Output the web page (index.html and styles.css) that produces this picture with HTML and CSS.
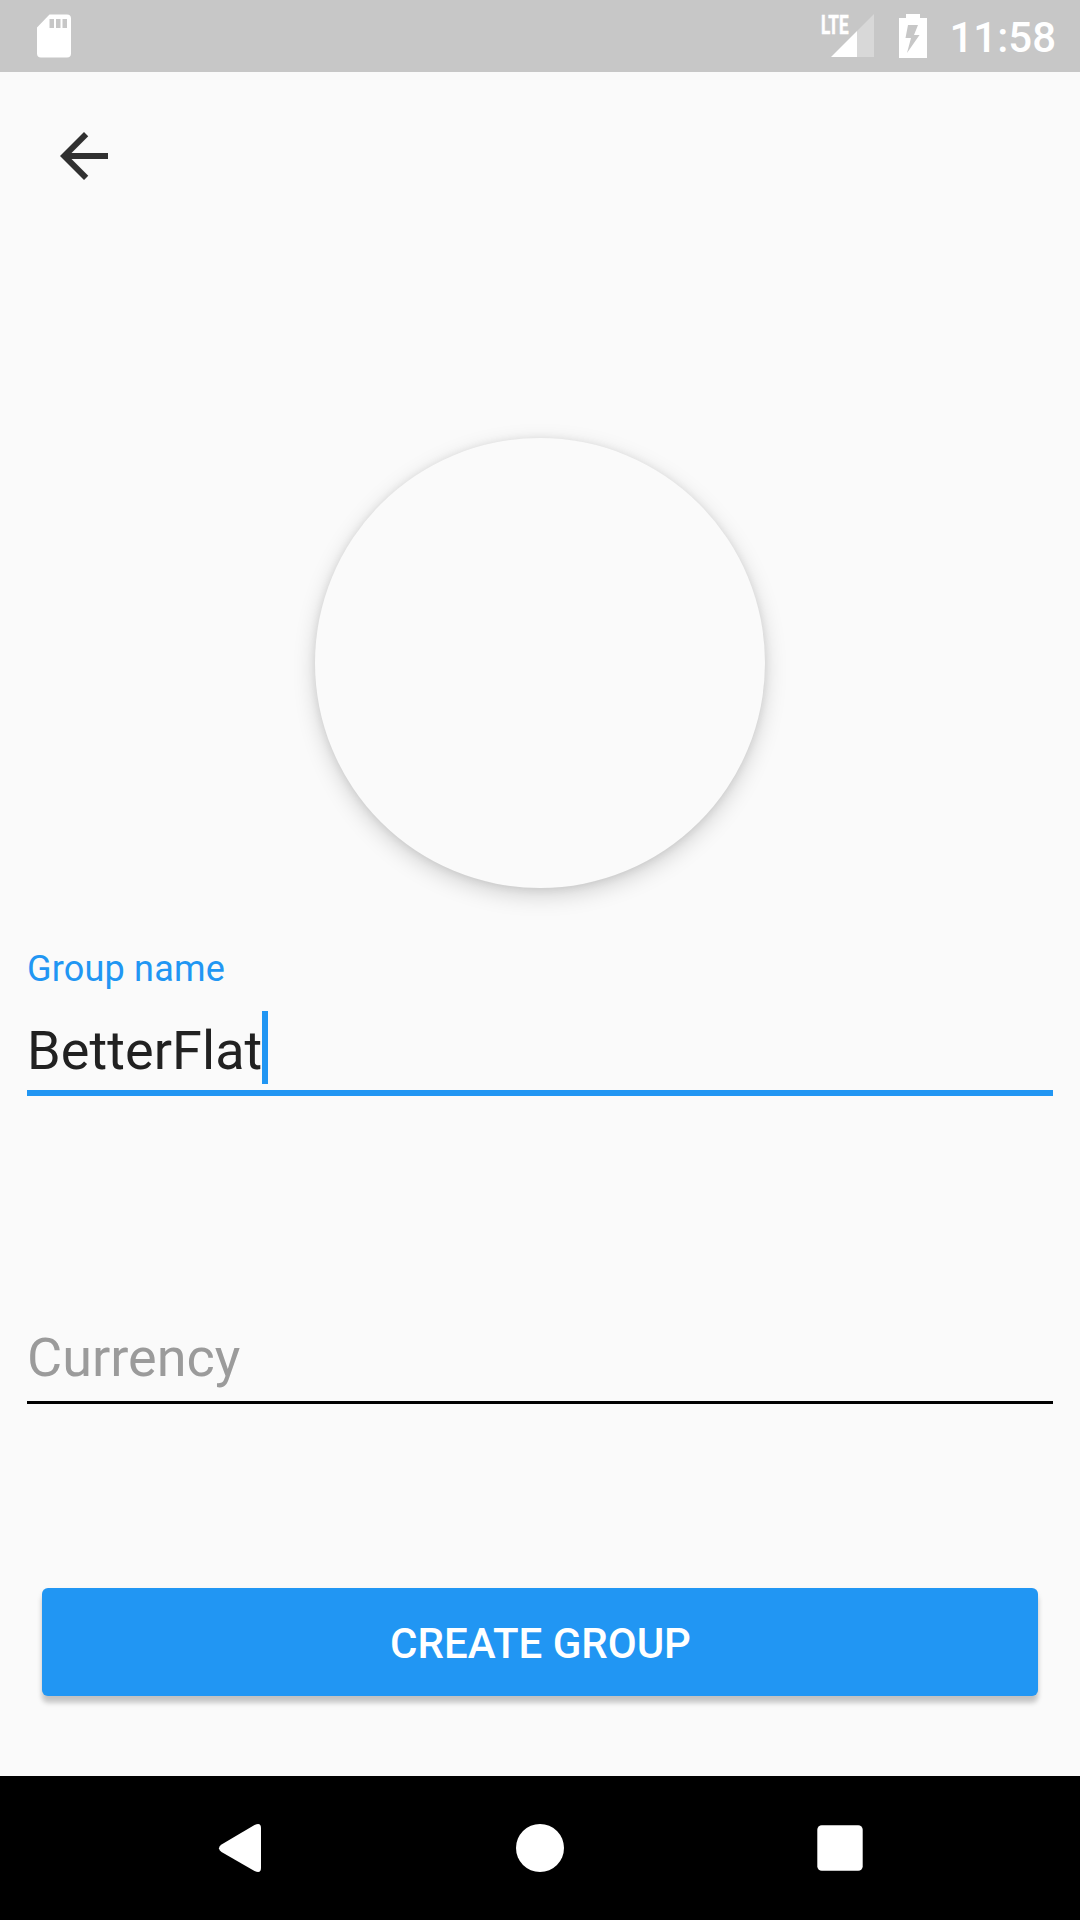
FILE: index.html
```html
<!DOCTYPE html>
<html lang="en">
<head>
<meta charset="utf-8">
<title>Create group</title>
<link rel="stylesheet" href="styles.css">
</head>
<body>
<div class="screen">
  <header class="status-bar">
    <svg class="sd-icon" width="36" height="44" viewBox="0 0 36 44"><path fill="#fff" fill-rule="evenodd" d="M13.500 .5H31q4 0 4 4V39.500q0 4-4 4H5q-4 0-4-4V13.500zM13.500 5v9H18V5zM20 5v9h4.500V5zM26.500 5v9H31V5z"/></svg>
    <div class="status-right">
      <svg class="signal-icon" width="56" height="60" viewBox="0 -8 56 60">
        <path fill="#fff" fill-opacity=".3" d="M56 0V43H39V17z"/>
        <path fill="#fff" d="M13 43 39 17V43z"/>
        <text class="lte" x="3" y="19.500" textLength="27.500" lengthAdjust="spacingAndGlyphs">LTE</text>
      </svg>
      <svg class="battery-icon" width="28" height="44" viewBox="0 0 28 44"><path fill="#fff" fill-rule="evenodd" d="M7 0H21V4H28V44H0V4H7zM9 11 6.500 24H12L8 39 20.500 21H15L19 11z"/></svg>
      <span class="clock">11:58</span>
    </div>
  </header>
  <main class="content">
    <button class="back" aria-label="Back"><svg width="72" height="72" viewBox="0 0 72 72"><path fill="#303030" d="M60 33H23.500L40.250 16.250 36 12 12 36 36 60 40.250 55.750 23.500 39H60z"/></svg></button>
    <div class="avatar"></div>
    <div class="field field-active">
      <div class="label">Group name</div>
      <div class="value"><span>BetterFlat</span><i class="cursor"></i></div>
    </div>
    <div class="field field-empty"><div class="placeholder">Currency</div></div>
    <button class="create">CREATE GROUP</button>
  </main>
  <nav class="nav-bar">
    <svg width="48" height="48" viewBox="0 0 48 48"><path fill="#fff" d="M5.500 20.500 38.500 1Q45 -2 45 4V44Q45 50 38.500 47L5.500 28Q.5 24.200 5.500 20.500z"/></svg>
    <svg width="48" height="48" viewBox="0 0 48 48"><circle cx="24" cy="24" r="24" fill="#fff"/></svg>
    <svg width="48" height="48" viewBox="0 0 48 48"><rect x="1.300" y="1.300" width="45.400" height="45.400" rx="4.500" fill="#fff"/></svg>
  </nav>
</div>
</body>
</html>
```
FILE: styles.css
```css
* { box-sizing: border-box; }
body { margin: 0; font-family: Roboto, sans-serif; }
button { border: 0; padding: 0; background: none; font-family: inherit; }
svg { display: block; flex: none; }
.screen {
  width: 1080px;
  height: 1920px;
  display: flex;
  flex-direction: column;
  background: #fafafa;
  overflow: hidden;
}
.status-bar {
  height: 72px;
  padding: 0 24px 0 36px;
  display: flex;
  justify-content: space-between;
  align-items: center;
  background: #c7c7c7;
}
.status-right { display: flex; align-items: center; }
.battery-icon { margin: 0 22px 0 25px; }
.lte { font-size: 26px; font-weight: 700; fill: #fff; stroke: #fff; stroke-width: .6px; }
.clock {
  color: #fff;
  font-size: 42px;
  font-weight: 500;
  line-height: 50px;
  padding-top: 3px;
}
.content {
  height: 1704px;
  display: flex;
  flex-direction: column;
  padding: 48px 27px 0;
}
.back { width: 72px; height: 72px; margin-left: 21px; }
.avatar {
  width: 450px;
  height: 450px;
  margin: 246px auto 0;
  flex: none;
  border-radius: 50%;
  background: #fafafa;
  box-shadow: 0 7px 22px rgba(0, 0, 0, .17), 0 1px 8px rgba(0, 0, 0, .09);
}
.field-active { margin-top: 60px; height: 148px; border-bottom: 6px solid #2196f3; }
.label { color: #2196f3; font-size: 36px; line-height: 42px; letter-spacing: .2px; }
.value {
  height: 73px;
  margin-top: 21px;
  display: flex;
  align-items: flex-end;
  color: #212121;
  font-size: 54px;
  line-height: 63px;
}
.value span { padding-bottom: 2px; letter-spacing: .08px; }
.cursor { width: 6px; height: 73px; background: #2196f3; }
.field-empty { margin-top: 230px; height: 78px; border-bottom: 3px solid #000; }
.placeholder { color: #9b9b9b; font-size: 54px; line-height: 63px; }
.create {
  height: 108px;
  margin: 184px 15px 0;
  border-radius: 6px;
  background: #2196f3;
  color: #fff;
  font-size: 42px;
  font-weight: 500;
  line-height: 50px;
  padding: 3px 0 0 1px;
  box-shadow: 0 7px 5px rgba(0, 0, 0, .19), 0 3px 6px rgba(0, 0, 0, .06);
}
.nav-bar {
  height: 144px;
  padding: 0 216px;
  display: flex;
  justify-content: space-between;
  align-items: center;
  background: #000;
}
```
